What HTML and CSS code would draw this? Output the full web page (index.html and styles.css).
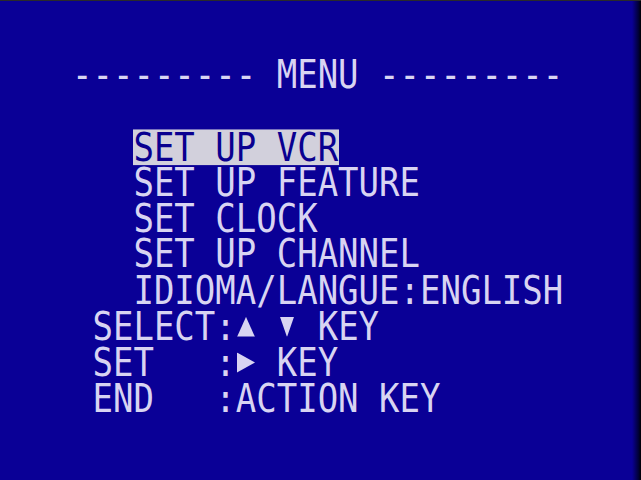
FILE: index.html
```html
<!DOCTYPE html>
<html lang="en">
<head>
    <meta charset="UTF-8">
    <meta name="viewport" content="width=device-width, initial-scale=1.0">
    <title>VCR MENU</title>
    <link rel="stylesheet" href="styles.css">
</head>
<body>
    <div class="screen">
        <div class="menu">
            <div class="row">--------- MENU ---------</div>
            <div class="row"></div>
            <div class="row">   <span class="selected">SET UP VCR</span></div>
            <div class="row">   SET UP FEATURE</div>
            <div class="row">   SET CLOCK</div>
            <div class="row">   SET UP CHANNEL</div>
            <div class="row">   IDIOMA/LANGUE:ENGLISH</div>
            <div class="row"> SELECT:<span class="key"><svg width="18" height="18" viewBox="0 0 18 18" preserveAspectRatio="none"><polygon points="9,0 18,18 0,18"/></svg></span> <span class="key"><svg width="18" height="18" viewBox="0 0 18 18" preserveAspectRatio="none"><polygon points="2,0 16,0 9,18"/></svg></span> KEY</div>
            <div class="row"> SET   :<span class="key"><svg width="18" height="18" viewBox="0 0 18 18" preserveAspectRatio="none"><polygon points="0,0 18,9 0,18"/></svg></span> KEY</div>
            <div class="row"> END   :ACTION KEY</div>
        </div>
    </div>
</body>
</html>
```

FILE: styles.css
```css
html, body {
    margin: 0;
    height: 100%;
}
body {
    background: linear-gradient(to right, #0a0096 0, #0a0096 calc(100% - 9px), #000030 calc(100% - 2px), #000 100%);
    border-top: 1px solid #2a2a2a;
    box-sizing: border-box;
    overflow: hidden;
}
.screen {
    padding: 56px 0 0 72px;
}
.menu {
    font-family: "DejaVu Sans Mono", monospace;
    font-size: 34px;
    line-height: 31.3px;
    color: #d8d4f2;
    transform: scaleY(1.15);
    transform-origin: 0 0;
}
.row {
    height: 31.3px;
    white-space: pre;
}
.selected {
    display: inline-block;
    background: #d2d0dc;
    color: #0a0090;
    padding-right: 1px;
}
.key {
    display: inline-block;
    width: 20.47px;
    height: 31.3px;
    vertical-align: top;
    position: relative;
}
.key svg {
    display: block;
    position: absolute;
    left: 1px;
    top: 7px;
    width: 18px;
    height: 17.4px;
    fill: #d8d4f2;
}
```
